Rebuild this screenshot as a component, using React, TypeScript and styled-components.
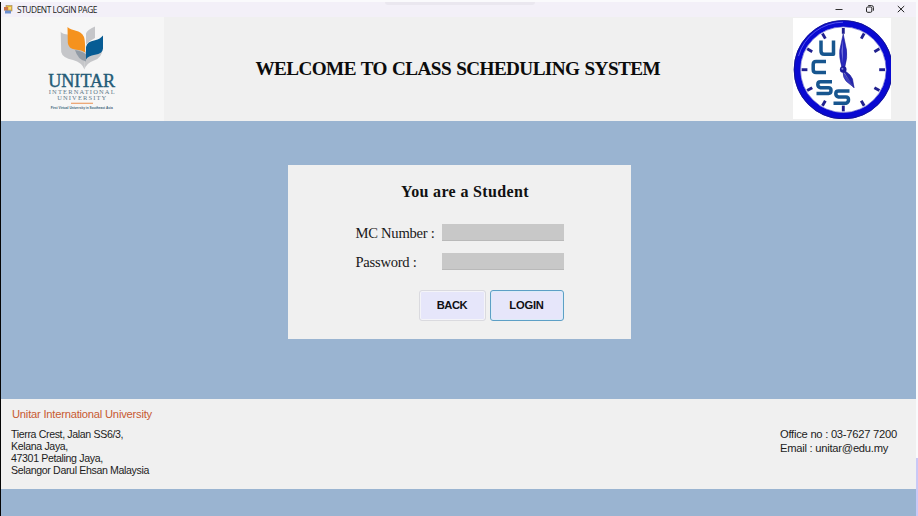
import React from 'react';
import styled, { createGlobalStyle } from 'styled-components';

const GlobalStyle = createGlobalStyle`
  * { box-sizing: border-box; }
  html, body { margin: 0; padding: 0; background: #fff; overflow: hidden; }
  button, input { font: inherit; margin: 0; }
`;

const Screen = styled.div`
  width: 918px;
  height: 516px;
  padding-top: 2px;
  display: flex;
  background: linear-gradient(#fafafc 458px, #c9c8f6 458px);
`;

const Window = styled.main`
  width: 916px;
  height: 514px;
  display: flex;
  flex-direction: column;
  border-left: 1px solid #050505;
  background: #9ab4d1;
  font-family: 'Liberation Sans', Arial, sans-serif;
  color: #1c1c1c;
`;

const TitleBar = styled.header`
  height: 15px;
  flex: none;
  display: flex;
  align-items: center;
  padding: 0 10px 0 2px;
  background: #f3f0f8;
`;

const TitleText = styled.span`
  width: 84px;
  margin-left: 4px;
  font: 8.4px/15px 'Open Sans', 'Noto Sans', sans-serif;
  letter-spacing: -0.44px;
  color: #222;
  white-space: nowrap;
`;

const Handle = styled.div`
  width: 150px;
  height: 3px;
  margin: 0 auto 0 284px;
  align-self: flex-start;
  border-radius: 0 0 3px 3px;
  background: #eae7ef;
`;

const WindowControls = styled.div`
  display: flex;
  gap: 21px;
  margin-bottom: 2px;
`;

const Banner = styled.section`
  height: 104px;
  flex: none;
  display: flex;
  background: #f0f0f0;
`;

const UnitarPanel = styled.div`
  width: 163px;
  background: #f6f6f6;
`;

const BannerTitle = styled.h1`
  width: 629px;
  margin: 0;
  padding: 40px 0 0 91.5px;
  font: bold 19.2px/24px 'Liberation Serif', 'Times New Roman', serif;
  letter-spacing: -0.59px;
  word-spacing: 1px;
  color: #0c0c0c;
  white-space: nowrap;
`;

const ClockPanel = styled.div`
  width: 98px;
  height: 101px;
  margin-top: 1px;
  background: #fff;
`;

const Body = styled.section`
  height: 278px;
  flex: none;
  display: flex;
  padding: 44px 0 0 286.5px;
`;

const Card = styled.form`
  width: 343.5px;
  height: 174px;
  background: #f0f0f0;
  font-family: 'Liberation Serif', 'Times New Roman', serif;
`;

const CardTitle = styled.h2`
  margin: 0;
  padding: 17px 0 0 113.5px;
  font-size: 16px;
  line-height: 20px;
  letter-spacing: 0.35px;
  color: #111;
  white-space: nowrap;
`;

const Fields = styled.div`
  display: grid;
  grid-template-columns: 86px 122px;
  row-gap: 11px;
  padding: 22px 0 0 68px;
`;

const FieldLabel = styled.label`
  font-size: 14.6px;
  line-height: 18px;
  letter-spacing: -0.26px;
  white-space: nowrap;
  color: #181818;
`;

const FieldInput = styled.input`
  width: 122px;
  height: 17px;
  padding: 0 3px;
  border: 0;
  border-bottom: 1px solid #b9b9b9;
  background: #c8c8c8;
  outline: 0;
`;

const Actions = styled.div`
  display: flex;
  gap: 4px;
  padding: 19px 0 0 131px;
`;

const ActionButton = styled.button<{ $primary?: boolean }>`
  width: ${(p) => (p.$primary ? 74 : 67)}px;
  height: 31px;
  padding: 0;
  border: 1px solid ${(p) => (p.$primary ? '#5d9fc6' : '#dadadf')};
  border-radius: 3px;
  background: #e6e6fa;
  box-shadow: inset 0 0 0 1px ${(p) => (p.$primary ? '#dcecf8' : '#f4f4f8')};
  font: bold 11.2px/29px 'Liberation Sans', Arial, sans-serif;
  letter-spacing: ${(p) => (p.$primary ? -0.2 : -0.45)}px;
  color: #101014;
`;

const Footer = styled.footer`
  height: 90px;
  flex: none;
  display: flex;
  justify-content: space-between;
  background: #f0f0f0;
  white-space: nowrap;
`;

const Address = styled.address`
  padding: 8px 0 0 10px;
  font-style: normal;
  font-size: 10.6px;
  line-height: 12px;
  letter-spacing: -0.36px;
`;

const University = styled.div`
  margin: 0 0 7px 1px;
  font-size: 11.2px;
  line-height: 14px;
  letter-spacing: -0.22px;
  color: #c75a32;
`;

const Contact = styled.div`
  width: 136px;
  padding-top: 29px;
  font-size: 11.2px;
  line-height: 13.5px;
  letter-spacing: -0.25px;
`;

const AppIcon = () => (
  <svg width="10" height="11" viewBox="0 0 10 11">
    <rect x="3" y="1.5" width="6" height="5.5" fill="#e6b63c" stroke="#9f8a62" strokeWidth=".6" />
    <rect x="1" y="3" width="4" height="3.6" fill="#c9744a" />
    <rect x="2" y="6.5" width="6" height="3" fill="#6c8fce" />
    <rect x="5.5" y="3" width="2.5" height="2.5" fill="#f8db7a" />
  </svg>
);

const MinimizeIcon = () => (
  <svg width="10" height="10" viewBox="0 0 10 10">
    <path d="M1.5 5.5h7" stroke="#333" />
  </svg>
);

const RestoreIcon = () => (
  <svg width="10" height="10" viewBox="0 0 10 10" fill="none" stroke="#222" strokeWidth="1">
    <rect x="1.5" y="3" width="5.3" height="5.3" rx="1.2" />
    <path d="M3.2 1.6h3.3q1.9 0 1.9 1.9v3.2" />
  </svg>
);

const CloseIcon = () => (
  <svg width="10" height="10" viewBox="0 0 10 10">
    <path d="M1.8 2l6.4 6.2M8.2 2L1.8 8.2" stroke="#222" strokeWidth="1" />
  </svg>
);

const UnitarLogo = () => (
  <svg width="163" height="104" viewBox="1 17 163 104">
    <path d="M60.7 31.5C62 35.500 75 34 80 38.500Q83.800 41 84.500 47L84.500 69.500Q82 62.500 73 60Q62.500 58 61.200 52Z" fill="#c5c6c9" />
    <path d="M86 33.500Q87 30 95 26.500V38Q89 41 86 44.500Z" fill="#c5c6c9" />
    <path d="M102.500 36V49Q102 58 94 60.500Q86.500 63 84.500 69.500L84 53Z" fill="#c5c6c9" />
    <path d="M75 50Q83 51 86 54.500V61.500Q78 60 75 50Z" fill="#929ba5" />
    <path d="M67.500 27C71 31 81 29.500 84 37Q85.200 40 85.200 52.500Q82 50 75 49.500Q68.500 48.500 67.800 43Z" fill="#f5921e" />
    <path d="M103 35.500V48.500Q102.500 54 95 54.800Q88 56 86 59.500V47Q87 41.500 95 40.200Q100.500 39 103 35.500Z" fill="#075c94" />
    <g textAnchor="middle" fontFamily="'Liberation Serif', serif" fill="#245b77">
      <text x="81.700" y="87" fontSize="18" textLength="67" lengthAdjust="spacingAndGlyphs" stroke="#245b77" strokeWidth=".4">UNITAR</text>
      <text x="81.700" y="94.200" fontSize="6.500" textLength="66" fill="#5f7a8a">INTERNATIONAL</text>
      <text x="81.700" y="99.800" fontSize="6.500" textLength="49" fill="#5f7a8a">UNIVERSITY</text>
    </g>
    <path d="M71 103.300H93" stroke="#eda06a" strokeWidth="1.200" />
    <text x="81.700" y="109.300" fontSize="3.800" textAnchor="middle" textLength="62" lengthAdjust="spacingAndGlyphs" fontWeight="bold" fontFamily="'Liberation Sans', sans-serif" fill="#3d6478">First Virtual University in Southeast Asia</text>
  </svg>
);

const tickAngles = [0, 30, 60, 90, 120, 150, 180, 210, 240, 270, 300, 330];

const ClockLogo = () => (
  <svg width="98" height="101" viewBox="793 18 98 101" style={{ display: 'block' }}>
    <circle cx="843.300" cy="69.700" r="46.200" fill="none" stroke="#0909d2" strokeWidth="6.500" />
    <circle cx="843.300" cy="69.700" r="49.200" fill="none" stroke="#161685" strokeWidth=".8" />
    <path d="M798.500 56A46.500 46.500 0 0 1 843 22.200" fill="none" stroke="#5555ea" strokeWidth="1" />
    <circle cx="843.300" cy="69.700" r="42.800" fill="none" stroke="#5555c5" strokeWidth=".6" />
    {tickAngles.map((angle) => (
      <path key={angle} d="M843.300 28V33.800" transform={`rotate(${angle} 843.300 69.700)`} stroke="#20208e" strokeWidth="2.900" />
    ))}
    <g fill="none" stroke="#17568f" strokeWidth="3.500" strokeLinejoin="round">
      <path d="M821 40.500V51Q821 54.300 824.300 54.300H833.500V40.500" />
      <path d="M826 61.500H816Q813.200 61.500 813.200 64.500V69.500Q813.200 72.500 816 72.500H826" />
      <path d="M832 81.800H820.500Q817.800 81.800 817.800 84.500T820.500 87.700H828.500Q831 87.700 831 90.500T828.500 93.500H816.500" />
      <path d="M849.500 91H838.500Q835.800 91 835.800 93.700T838.500 97H846Q848.500 97 848.500 99.800T846 103.200H833.500" />
    </g>
    <path d="M843.200 34L839.800 50Q839 57 841.800 67H844.800Q847.600 57 846.500 50Z" fill="#2828bc" stroke="#171794" strokeWidth=".6" />
    <path d="M843 40L841.500 51L842.800 63Z" fill="#7a7adc" />
    <path d="M843.500 71L854 87.500L852.500 79Q850.500 74.500 846.500 72Z" fill="#2424ae" stroke="#171794" strokeWidth=".6" />
    <path d="M843 72Q843 78 846.500 81.500L854 87.500Z" fill="#4242c5" stroke="#171794" strokeWidth=".6" />
    <circle cx="843.200" cy="69.500" r="3.300" fill="#1b1b9b" />
    <circle cx="842.400" cy="68.800" r="1" fill="#8585db" />
  </svg>
);

export default function App() {
  return (
    <>
      <GlobalStyle />
      <Screen>
        <Window>
          <TitleBar>
            <AppIcon />
            <TitleText>STUDENT LOGIN PAGE</TitleText>
            <Handle />
            <WindowControls>
              <MinimizeIcon />
              <RestoreIcon />
              <CloseIcon />
            </WindowControls>
          </TitleBar>
          <Banner>
            <UnitarPanel><UnitarLogo /></UnitarPanel>
            <BannerTitle>WELCOME TO CLASS SCHEDULING SYSTEM</BannerTitle>
            <ClockPanel><ClockLogo /></ClockPanel>
          </Banner>
          <Body>
            <Card onSubmit={(e) => e.preventDefault()}>
              <CardTitle>You are a Student</CardTitle>
              <Fields>
                <FieldLabel htmlFor="mc">MC Number :</FieldLabel>
                <FieldInput id="mc" />
                <FieldLabel htmlFor="password">Password :</FieldLabel>
                <FieldInput id="password" type="password" />
              </Fields>
              <Actions>
                <ActionButton type="button">BACK</ActionButton>
                <ActionButton $primary>LOGIN</ActionButton>
              </Actions>
            </Card>
          </Body>
          <Footer>
            <Address>
              <University>Unitar International University</University>
              <div>Tierra Crest, Jalan SS6/3,</div>
              <div>Kelana Jaya,</div>
              <div>47301 Petaling Jaya,</div>
              <div>Selangor Darul Ehsan Malaysia</div>
            </Address>
            <Contact>
              <div>Office no : 03-7627 7200</div>
              <div>Email : unitar@edu.my</div>
            </Contact>
          </Footer>
        </Window>
      </Screen>
    </>
  );
}
